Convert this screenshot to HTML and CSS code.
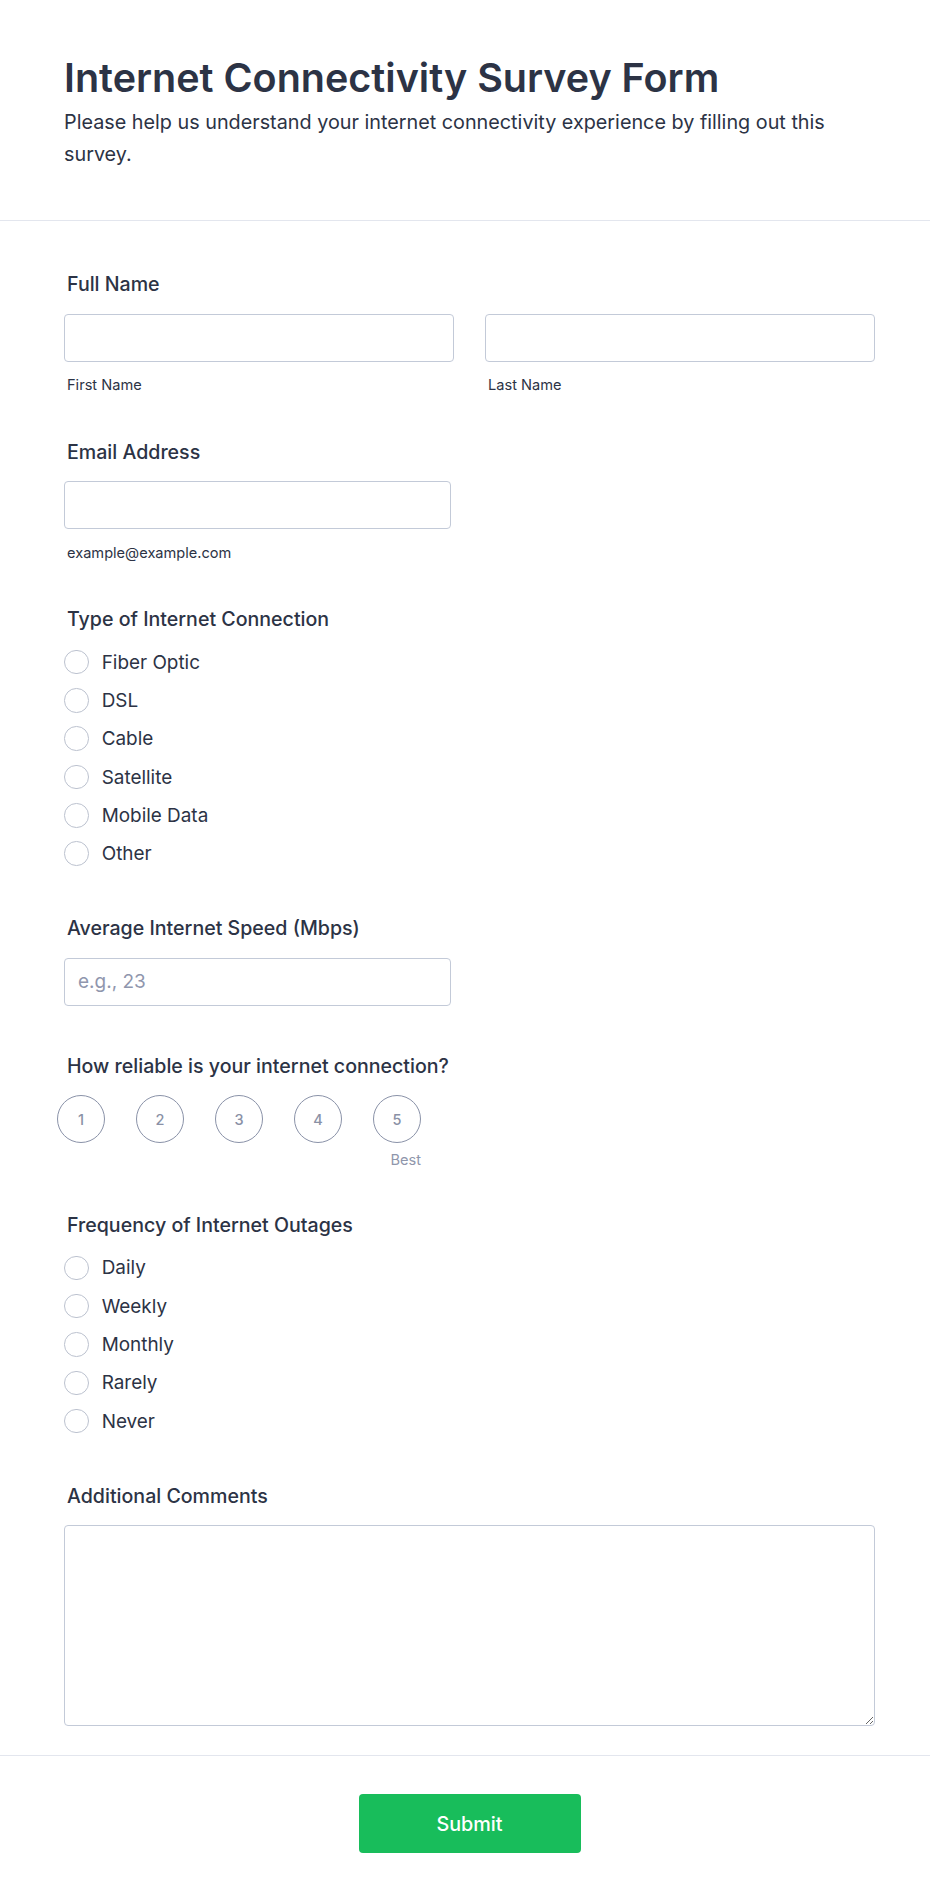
FILE: index.html
```html
<!DOCTYPE html>
<html lang="en">
<head>
<meta charset="utf-8">
<title>Internet Connectivity Survey Form</title>
<link rel="stylesheet" href="styles.css">
</head>
<body>
<header class="form-header">
  <h1 class="form-title">Internet Connectivity Survey Form</h1>
  <p class="form-subtitle">Please help us understand your internet connectivity experience by filling out this survey.</p>
</header>

<main class="form-body">
  <div class="field">
    <div class="label">Full Name</div>
    <div class="name-grid">
      <div>
        <input class="input" type="text">
        <div class="sublabel">First Name</div>
      </div>
      <div>
        <input class="input" type="text">
        <div class="sublabel">Last Name</div>
      </div>
    </div>
  </div>

  <div class="field">
    <div class="label">Email Address</div>
    <input class="input input--half" type="email">
    <div class="sublabel">example@example.com</div>
  </div>

  <div class="field">
    <div class="label label--group">Type of Internet Connection</div>
    <ul class="radio-list">
      <li class="radio-row"><span class="radio"></span><span class="radio-text">Fiber Optic</span></li>
      <li class="radio-row"><span class="radio"></span><span class="radio-text">DSL</span></li>
      <li class="radio-row"><span class="radio"></span><span class="radio-text">Cable</span></li>
      <li class="radio-row"><span class="radio"></span><span class="radio-text">Satellite</span></li>
      <li class="radio-row"><span class="radio"></span><span class="radio-text">Mobile Data</span></li>
      <li class="radio-row"><span class="radio"></span><span class="radio-text">Other</span></li>
    </ul>
  </div>

  <div class="field field--loose">
    <div class="label">Average Internet Speed (Mbps)</div>
    <input class="input input--half" type="text" placeholder="e.g., 23">
  </div>

  <div class="field field--rating">
    <div class="label">How reliable is your internet connection?</div>
    <div class="rating">
      <div class="rating-row">
        <span class="rating-item">1</span>
        <span class="rating-item">2</span>
        <span class="rating-item">3</span>
        <span class="rating-item">4</span>
        <span class="rating-item">5</span>
      </div>
      <div class="rating-hint">Best</div>
    </div>
  </div>

  <div class="field">
    <div class="label label--group">Frequency of Internet Outages</div>
    <ul class="radio-list">
      <li class="radio-row"><span class="radio"></span><span class="radio-text">Daily</span></li>
      <li class="radio-row"><span class="radio"></span><span class="radio-text">Weekly</span></li>
      <li class="radio-row"><span class="radio"></span><span class="radio-text">Monthly</span></li>
      <li class="radio-row"><span class="radio"></span><span class="radio-text">Rarely</span></li>
      <li class="radio-row"><span class="radio"></span><span class="radio-text">Never</span></li>
    </ul>
  </div>

  <div class="field field--last">
    <div class="label">Additional Comments</div>
    <textarea class="textarea"></textarea>
  </div>
</main>

<footer class="form-footer">
  <button class="submit" type="button">Submit</button>
</footer>
</body>
</html>
```

FILE: styles.css
```css
* {
  box-sizing: border-box;
}

html, body {
  margin: 0;
  padding: 0;
  background: #ffffff;
}

body {
  font-family: Inter, "Noto Sans", "Liberation Sans", sans-serif;
  color: #2c3345;
}

.form-header {
  padding: 54px 55px 50px 64px;
  border-bottom: 1px solid #e3e6ee;
}

.form-title {
  margin: 0;
  font-size: 39.5px;
  line-height: 48px;
  font-weight: 600;
  color: #2c3345;
}

.form-subtitle {
  margin: 5px 0 0;
  font-size: 19.8px;
  line-height: 31.5px;
  font-weight: 400;
  color: #2c3345;
}

.form-body {
  padding: 50px 55px 0 64px;
}

.field {
  margin-bottom: 42.5px;
}

.field--loose {
  margin-bottom: 47px;
}

.field--rating {
  margin-bottom: 41px;
}

.field--last {
  margin-bottom: 0;
}

.label {
  margin: 0 0 15.5px 3px;
  font-size: 19.6px;
  line-height: 27px;
  font-weight: 500;
  color: #2c3345;
}

.label--group {
  margin-bottom: 10px;
}

.name-grid {
  display: grid;
  grid-template-columns: 1fr 1fr;
  column-gap: 31px;
}

.input {
  display: block;
  width: 100%;
  height: 48px;
  margin: 0;
  padding: 0 13px;
  border: 1px solid #c3cad8;
  border-radius: 4px;
  background: #ffffff;
  font-family: Inter, "Noto Sans", sans-serif;
  font-size: 19px;
  color: #2c3345;
  outline: none;
}

.input::placeholder {
  color: #8f96ad;
}

.input--half {
  width: 387px;
}

.sublabel {
  margin: 13.5px 0 0 3px;
  font-size: 14.6px;
  line-height: 21px;
  color: #2c3345;
}

.radio-list {
  list-style: none;
  margin: 0;
  padding: 0;
}

.radio-row {
  display: flex;
  align-items: center;
  height: 38.3px;
}

.radio {
  flex: none;
  width: 24.5px;
  height: 24.5px;
  border: 1px solid #bcc2cf;
  border-radius: 50%;
  background: #ffffff;
}

.radio-text {
  margin-left: 13.2px;
  font-size: 18.9px;
  line-height: 27px;
  color: #2c3345;
}

.rating {
  display: inline-flex;
  flex-direction: column;
  margin-left: -7px;
}

.rating-row {
  display: flex;
  gap: 31px;
}

.rating-item {
  display: flex;
  align-items: center;
  justify-content: center;
  width: 48px;
  height: 48px;
  border: 1px solid #8a92a8;
  border-radius: 50%;
  font-size: 14.5px;
  font-weight: 500;
  color: #8a91a6;
}

.rating-hint {
  margin-top: 6.5px;
  text-align: right;
  font-size: 14.6px;
  line-height: 21px;
  color: #8f96ab;
}

.textarea {
  display: block;
  width: 100%;
  height: 200.5px;
  margin: 0;
  padding: 10px 13px;
  border: 1px solid #c3cad8;
  border-radius: 4px;
  background: #ffffff;
  font-family: Inter, "Noto Sans", sans-serif;
  font-size: 18px;
  resize: vertical;
  outline: none;
}

.form-footer {
  margin-top: 29.5px;
  padding: 38px 55px 50px 64px;
  border-top: 1px solid #e3e6ee;
  display: flex;
  justify-content: center;
}

.submit {
  width: 222px;
  height: 59px;
  border: none;
  border-radius: 4px;
  background: #18bd5b;
  color: #ffffff;
  font-family: Inter, "Noto Sans", sans-serif;
  font-size: 19.8px;
  font-weight: 500;
  cursor: pointer;
}
```
